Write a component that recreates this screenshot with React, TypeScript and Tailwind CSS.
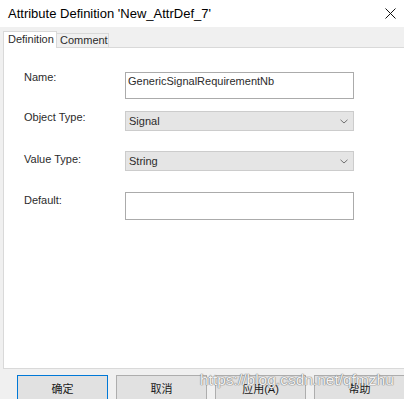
import React from 'react'

const ui = { fontFamily: '"Liberation Sans", Arial, sans-serif' }
const cjk = { fontFamily: '"Liberation Sans", "Noto Sans CJK SC", sans-serif' }

function Chevron() {
  return (
    <svg width="8" height="5" viewBox="0 0 8 5" className="mr-[5px]">
      <path d="M0.5 0.8 L4 4 L7.5 0.8" fill="none" stroke="#707070" strokeWidth="1" />
    </svg>
  )
}

function Select({ value }: { value: string }) {
  return (
    <div className="w-[229px] h-[20px] bg-[#e5e5e5] border border-[#cccccc] flex items-center justify-between pl-[3px]">
      <span className="text-[11px] leading-[13px] text-[#2b2b2b]">{value}</span>
      <Chevron />
    </div>
  )
}

function Row({ label, labelTop, mt, children }: { label: string; labelTop: string; mt: string; children: React.ReactNode }) {
  return (
    <div className={`flex items-start pl-[20px] ${mt}`}>
      <div className={`w-[101px] text-[11px] leading-[13px] text-[#2b2b2b] ${labelTop}`}>{label}</div>
      {children}
    </div>
  )
}

export default function App() {
  const buttons = ['确定', '取消', '应用(A)', '帮助']

  return (
    <div className="relative w-[404px] h-[399px] overflow-hidden bg-[#f0f0f0]" style={ui}>
      {/* title bar */}
      <div className="h-[27px] bg-white flex items-center justify-between pl-[8px] pb-[1px]">
        <span className="text-[13px] leading-[15px] text-black">Attribute Definition 'New_AttrDef_7'</span>
        <svg width="11" height="11" viewBox="0 0 11 11" className="mr-[8px]">
          <path d="M0.5 0.5 L10.5 10.5 M10.5 0.5 L0.5 10.5" stroke="#111" strokeWidth="1" />
        </svg>
      </div>

      {/* tabs */}
      <div className="h-[20px] pl-[3px] flex items-end">
        <div className="relative z-10 h-[17px] w-[54px] -mb-px bg-white border border-b-0 border-[#d9d9d9] pl-[4px] pt-[1px] text-[11px] leading-[13px] text-[#2b2b2b]">
          Definition
        </div>
        <div className="h-[14px] w-[52px] border-t border-r border-[#d9d9d9] pl-[3px] text-[11px] leading-[13px] text-[#2b2b2b]">
          Comment
        </div>
      </div>

      {/* tab page */}
      <div className="ml-[3px] h-[322px] bg-white border-l border-t border-b border-[#d9d9d9]">
        <Row label="Name:" labelTop="-mt-px" mt="mt-[24px]">
          <div className="w-[229px] h-[27px] border border-[#ababab] bg-white pl-[2px] pt-[2px] text-[11px] leading-[13px] text-[#2b2b2b]">
            GenericSignalRequirementNb
          </div>
        </Row>
        <Row label="Object Type:" labelTop="mt-0" mt="mt-[12px]">
          <Select value="Signal" />
        </Row>
        <Row label="Value Type:" labelTop="mt-[2px]" mt="mt-[20px]">
          <Select value="String" />
        </Row>
        <Row label="Default:" labelTop="mt-[2px]" mt="mt-[21px]">
          <div className="w-[229px] h-[28px] border border-[#ababab] bg-white" />
        </Row>
      </div>

      {/* buttons */}
      <div className="flex gap-[8px] pl-[17px] pt-[6px]" style={cjk}>
        {buttons.map((b, i) => (
          <div
            key={b}
            className={`w-[91px] h-[28px] shrink-0 flex items-center justify-center bg-[#e1e1e1] text-[11px] text-[#1a1a1a] border ${
              i === 0 ? 'border-[#0078d7]' : 'border-[#adadad]'
            }`}
          >
            {b}
          </div>
        ))}
      </div>

      {/* watermark */}
      <div className="absolute left-[200px] top-[372px] text-[15.5px] leading-none text-white/90 [text-shadow:0_0_1px_#7a7a7a,0_0_1px_#7a7a7a,0_0_1px_#7a7a7a]">
        https://blog.csdn.net/qfmzhu
      </div>
    </div>
  )
}
